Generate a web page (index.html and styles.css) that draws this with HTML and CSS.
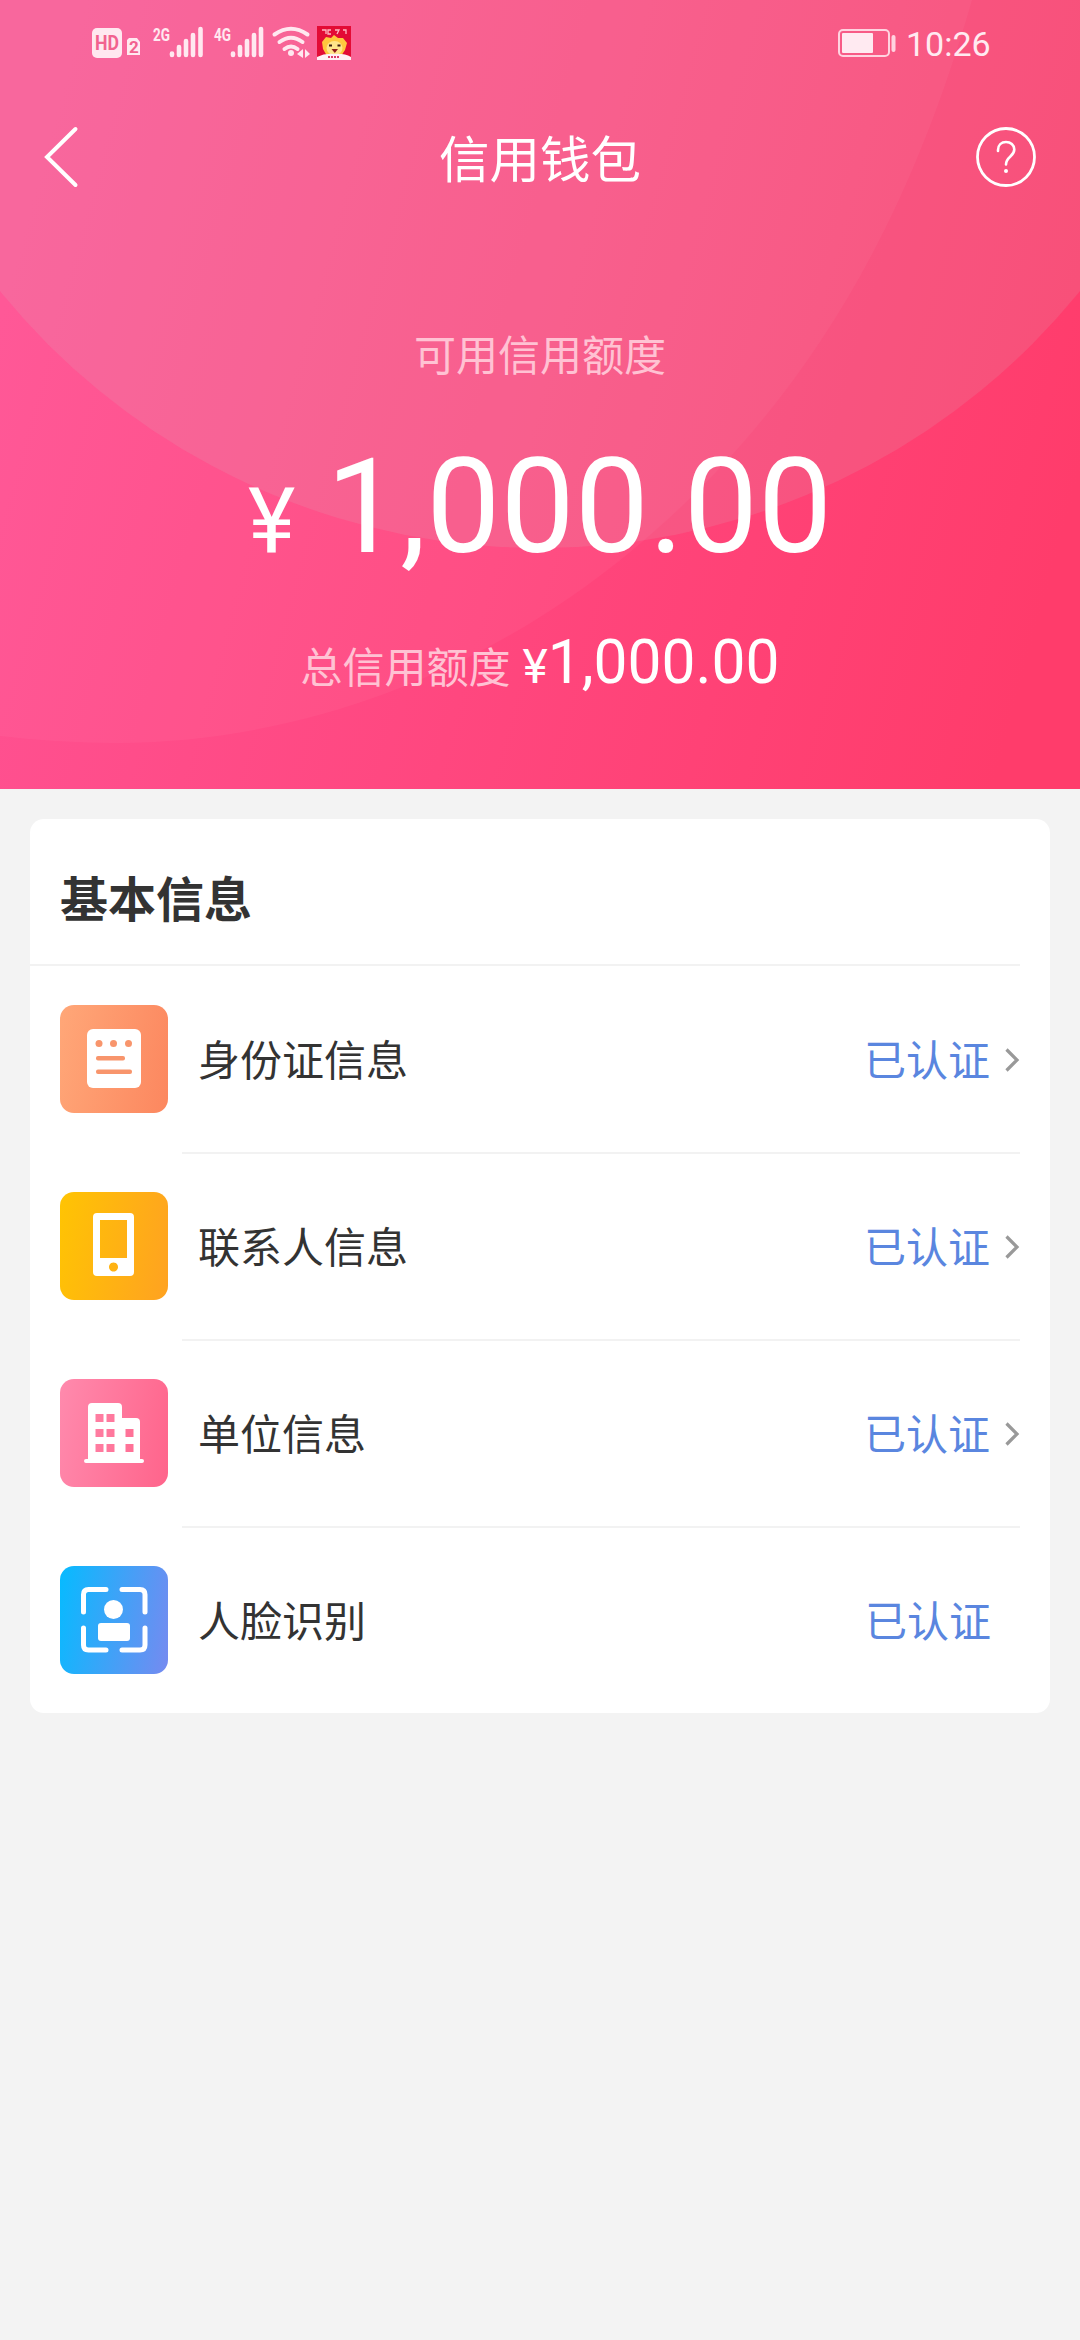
FILE: index.html
```html
<!DOCTYPE html>
<html lang="zh-CN">
<head>
<meta charset="utf-8">
<title>信用钱包</title>
<link rel="stylesheet" href="styles.css">
</head>
<body>
<header class="hero">
  <svg class="hero-bg" viewBox="0 0 1080 789" aria-hidden="true">
    <defs>
      <linearGradient id="base" x1="0" y1="0.4" x2="1" y2="0.6"><stop offset="0" stop-color="#ff5293"/><stop offset=".5" stop-color="#ff477f"/><stop offset="1" stop-color="#ff3c6b"/></linearGradient>
    </defs>
    <rect width="1080" height="789" fill="url(#base)"/>
    <path d="M0 0V736Q60 743 115 743C310 743 490 667 629 553C790 420 900 250 972 0z" fill="#fff" fill-opacity=".04"/>
    <circle cx="540" cy="-148" r="696" fill="#d0c4c4" fill-opacity=".14"/>
  </svg>
  <div class="status">
    <svg class="status-icons" viewBox="0 0 280 60" aria-hidden="true">
      <rect x="12" y="18" width="30" height="30" rx="5" fill="#ffe8f0"/>
      <text class="hd" x="15" y="40" textLength="24" lengthAdjust="spacingAndGlyphs">HD</text>
      <path d="M49 28h8l3 4v13H47V30z" fill="#ffe8f0"/>
      <text class="sim" x="49" y="43">2</text>
      <text class="net" x="73" y="31" textLength="17" lengthAdjust="spacingAndGlyphs">2G</text>
      <text class="net" x="134" y="31" textLength="17" lengthAdjust="spacingAndGlyphs">4G</text>
      <g stroke="#ffe8f0" stroke-width="4.600" stroke-linecap="round">
        <path d="M92 43.500v1.500M99 37v8M106 31v14M113 25v20M120.500 19v26"/>
        <path d="M153 43.500v1.500M160 37v8M167 31v14M174 25v20M181 19v26"/>
      </g>
      <g fill="none" stroke="#ffe8f0" stroke-width="4" stroke-linecap="round">
        <path d="M194.500 24.500q16.500-11.500 33 0M199.500 32q11.500-8.500 23 0M204.500 39q6.500-5 13 0"/>
      </g>
      <circle cx="211" cy="43" r="3" fill="#ffe8f0"/>
      <path d="M223 39v9l-6-4zM225 39v9l5-4z" fill="#ffe8f0"/>
      <rect x="237" y="16" width="34" height="34" fill="#e30b35"/>
      <path d="M242 20h4v4M251 20h-3v4h3M255 20h4l-2 4M263 20h3v4" stroke="#ffb8c2" stroke-width="1.300" fill="none"/>
      <path d="M243 39l-1-7 4-5 5 1 3-3 4 3 5 0 4 5-2 7-4 6h-14z" fill="#ffc83e"/>
      <ellipse cx="254.500" cy="38" rx="8" ry="7" fill="#ffe58a"/>
      <path d="M249 35.500h3M257.500 35.500h3" stroke="#3b1a10" stroke-width="2"/>
      <path d="M251.500 39h6.500l-3.200 4z" fill="#8f1b1b"/>
      <path d="M237 50v-3q8-4 17-3 10-1 17 3v3z" fill="#fff0f4"/>
      <path d="M248 47h12" stroke="#dd3d67" stroke-width="2" stroke-dasharray="2 1"/>
    </svg>
    <div class="status-right">
      <svg class="battery" viewBox="0 0 60 30" aria-hidden="true">
        <rect x="1" y="2" width="50" height="26" rx="4" fill="none" stroke="#ffd3e0" stroke-width="2"/>
        <rect x="4" y="5" width="31" height="20" rx="1" fill="#ffeaf1"/>
        <rect x="53.500" y="7" width="4" height="17" rx="2" fill="#ffd3e0"/>
      </svg>
      <span class="clock">10:26</span>
    </div>
  </div>
  <nav class="nav">
    <svg class="back" viewBox="0 0 40 64" aria-hidden="true"><path d="M33.500 4L5 32l28.500 28" fill="none" stroke="#fff" stroke-width="4" stroke-linecap="round"/></svg>
    <h1 class="nav-title">信用钱包</h1>
    <svg class="help" viewBox="0 0 60 60" aria-hidden="true"><circle cx="30" cy="30" r="28.500" fill="none" stroke="#fff" stroke-width="2.800"/><path d="M22 24v-1c0-5 3.500-8 8-8s8.300 3 8.300 7.500c0 7-8.300 7-8.300 15" fill="none" stroke="#fff" stroke-width="2.600" stroke-linecap="round"/><circle cx="30" cy="44" r="2" fill="#fff"/></svg>
  </nav>
  <p class="available">可用信用额度</p>
  <p class="amount"><span class="amount-sign">¥</span><span class="amount-value">1,000.00</span></p>
  <p class="total"><span class="total-label">总信用额度</span><span class="total-sign">¥</span><span class="total-value">1,000.00</span></p>
</header>
<main class="card">
  <h2 class="card-title">基本信息</h2>
  <ul class="list">
    <li class="row">
      <span class="tile tile-id"><svg viewBox="0 0 108 108"><rect x="27" y="24" width="54" height="59" rx="6" fill="#fff"/><g fill="#f8956c"><circle cx="39" cy="38.500" r="3.500"/><circle cx="53.500" cy="38.500" r="3.500"/><circle cx="68.500" cy="38.500" r="3.500"/><rect x="36" y="51" width="29" height="4.500" rx="2"/><rect x="36" y="64.500" width="36" height="4.500" rx="2"/></g></svg></span>
      <div class="row-body"><span class="label">身份证信息</span><span class="state">已认证</span><svg class="chevron" viewBox="0 0 16 24"><path d="M2.500 1.500L13 12 2.500 22.500" fill="none" stroke="#999" stroke-width="3.200"/></svg></div>
    </li>
    <li class="row">
      <span class="tile tile-phone"><svg viewBox="0 0 108 108"><path fill="#fff" fill-rule="evenodd" d="M37 21h33q4 0 4 4v55q0 4-4 4H37q-4 0-4-4V25q0-4 4-4zM40 28v38h27V28zM53.500 70.500a4.500 4.500 0 1 0 .01 0z"/></svg></span>
      <div class="row-body"><span class="label">联系人信息</span><span class="state">已认证</span><svg class="chevron" viewBox="0 0 16 24"><path d="M2.500 1.500L13 12 2.500 22.500" fill="none" stroke="#999" stroke-width="3.200"/></svg></div>
    </li>
    <li class="row">
      <span class="tile tile-company"><svg viewBox="0 0 108 108"><path fill="#fff" fill-rule="evenodd" d="M32 24h26q4 0 4 4v11h14q4 0 4 4v37h2q2 0 2 2t-2 2H26q-2 0-2-2t2-2h2V28q0-4 4-4zM35.500 35v8h8v-8zM46.500 35v8h8v-8zM35.500 50v8h8v-8zM46.500 50v8h8v-8zM65.500 50v8h8v-8zM35.500 65v8h8v-8zM46.500 65v8h8v-8zM65.500 65v8h8v-8z"/></svg></span>
      <div class="row-body"><span class="label">单位信息</span><span class="state">已认证</span><svg class="chevron" viewBox="0 0 16 24"><path d="M2.500 1.500L13 12 2.500 22.500" fill="none" stroke="#999" stroke-width="3.200"/></svg></div>
    </li>
    <li class="row">
      <span class="tile tile-face"><svg viewBox="0 0 108 108"><path d="M23.500 46V28.500q0-5 5-5H46M62 23.500h18q5 0 5 5V46M85 62v17q0 5-5 5H62M46 84H28.500q-5 0-5-5V62" fill="none" stroke="#fff" stroke-width="5" stroke-linecap="round"/><circle cx="53.500" cy="43.500" r="9.500" fill="#fff"/><rect x="38" y="57" width="32" height="18" rx="3" fill="#fff"/></svg></span>
      <div class="row-body"><span class="label">人脸识别</span><span class="state">已认证</span></div>
    </li>
  </ul>
</main>
</body>
</html>
```

FILE: styles.css
```css
* { box-sizing: border-box; margin: 0; padding: 0; }
body { min-height: 2340px; background: #f3f3f3; color: #333; font-family: Roboto, "Noto Sans CJK SC", sans-serif; font-size: 42px; }
svg { display: block; }
.hero { position: relative; z-index: 0; height: 789px; overflow: hidden; color: #fff; display: flex; flex-direction: column; }
.hero-bg { position: absolute; z-index: -1; left: 0; top: 0; width: 1080px; height: 789px; }
.status { height: 84px; padding: 10px 90px 0 80px; display: flex; justify-content: space-between; }
.status-icons { width: 280px; height: 60px; }
.hd { font: 700 20px Roboto, sans-serif; fill: #f2628f; }
.sim { font: 700 17px Roboto, sans-serif; fill: #f2608f; }
.net { font: 700 19px Roboto, sans-serif; fill: #ffe8f0; }
.status-right { display: flex; align-items: center; gap: 8px; height: 66px; }
.battery { width: 60px; height: 30px; }
.clock { width: 84px; padding-top: 2px; font-size: 34px; line-height: 40px; color: #ffeaf1; }
.nav { height: 146px; padding: 0 44px 0 42px; display: grid; grid-template-columns: 60px 1fr 60px; align-items: center; }
.back { width: 40px; height: 64px; }
.nav-title { padding: 7px 0 0 2px; font-size: 50.500px; font-weight: 400; line-height: 76px; text-align: center; }
.help { width: 60px; height: 60px; }
.available { margin-top: 96px; line-height: 62px; text-align: center; color: #ffc2d3; }
.amount { display: flex; justify-content: center; align-items: baseline; gap: 31px; margin-top: 41px; line-height: 156px; }
.amount-sign { font-size: 90px; }
.amount-value { font-size: 132px; }
.total { display: flex; justify-content: center; align-items: baseline; margin-top: 28px; line-height: 70px; }
.total-label { color: #ffc2d3; margin-right: 12px; }
.total-sign { font-size: 48px; }
.total-value { font-size: 60.500px; }
.card { margin: 30px 30px 0; height: 894px; border-radius: 14px; background: #fff; }
.card-title { height: 147px; margin-right: 30px; padding: 42px 0 0 30px; border-bottom: 2px solid #f2f2f2; font-size: 48px; line-height: 80px; font-weight: 700; }
.list { margin-top: -1px; list-style: none; }
.row { height: 187px; display: flex; align-items: center; padding: 0 30px; }
.tile { width: 108px; height: 108px; border-radius: 14px; }
.tile-id { background: linear-gradient(100deg, #ffa778, #fc875f); }
.tile-phone { background: linear-gradient(100deg, #ffc403, #ffa221); }
.tile-company { background: linear-gradient(100deg, #ff8aad, #ff648b); }
.tile-face { background: linear-gradient(100deg, #06bbff, #768af0); }
.row-body { flex: 1; align-self: stretch; display: flex; align-items: center; margin-left: 14px; padding-left: 16px; border-top: 2px solid #f2f2f2; }
.row:first-child .row-body { border-top-color: transparent; }
.label { flex: 1; padding-top: 5px; line-height: 60px; }
.state { padding-top: 5px; color: #5a86df; line-height: 60px; margin-right: 29px; }
.chevron { width: 16px; height: 24px; margin-left: -15px; }
```
